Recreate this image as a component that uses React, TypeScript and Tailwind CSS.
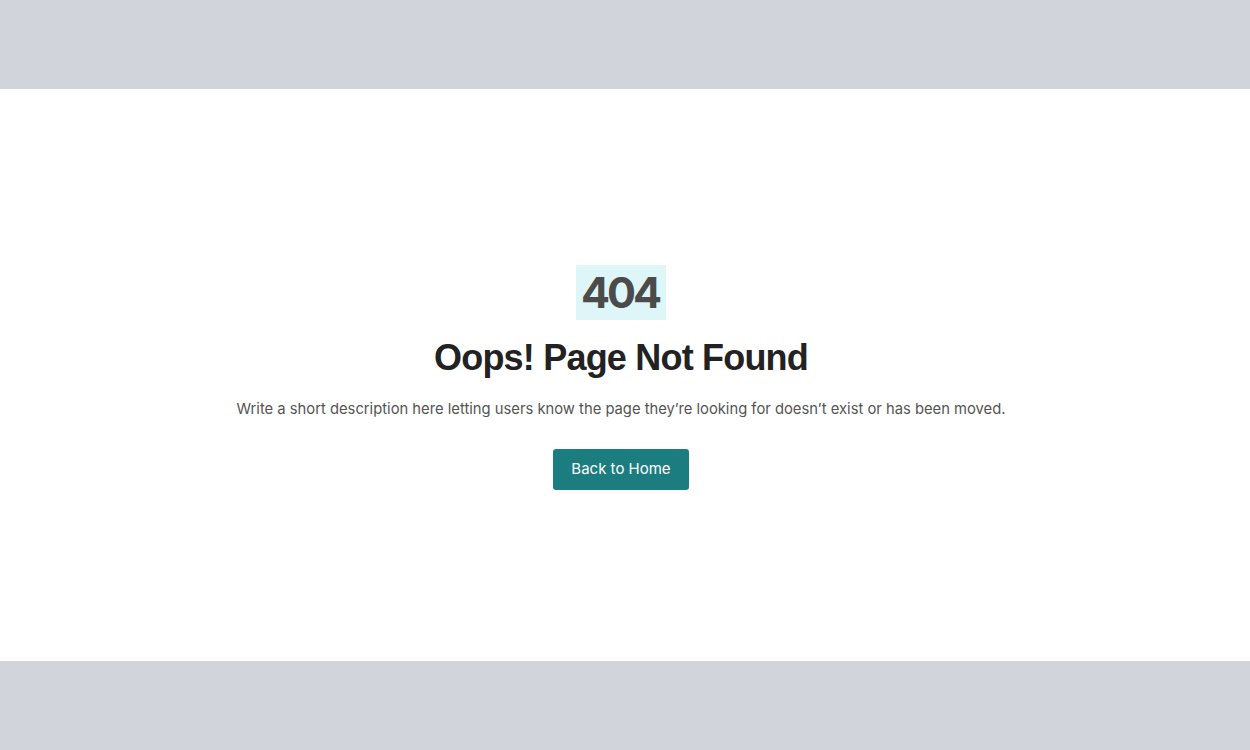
export default function App() {
  return (
    <div className="w-[1250px] h-[750px] flex flex-col bg-[#d1d5db]" style={{ fontFamily: "Inter, 'Liberation Sans', sans-serif" }}>
      <div className="h-[89px] shrink-0" />
      <div className="h-[572px] bg-white flex flex-col items-center justify-center pr-[8px]">
        <div className="mt-[4px] bg-[#dff6f8] pl-[5px] pr-[7px] h-[55px] flex items-center text-[43px] font-bold text-[#4b4b4b] leading-none tracking-[-3px]">404</div>
        <h1 className="mt-[16px] text-[36px] font-bold text-[#222222] leading-[44px] tracking-[-0.8px]" style={{ fontFamily: "'Liberation Sans', Inter, sans-serif" }}>Oops! Page Not Found</h1>
        <p className="mt-[18px] text-[14.77px] text-[#555555] leading-[22px]">Write a short description here letting users know the page they’re looking for doesn’t exist or has been moved.</p>
        <button className="mt-[29px] w-[136px] h-[41px] bg-[#1b7d80] text-white text-[15px] rounded-[3px]">Back to Home</button>
      </div>
      <div className="h-[89px] shrink-0" />
    </div>
  );
}
